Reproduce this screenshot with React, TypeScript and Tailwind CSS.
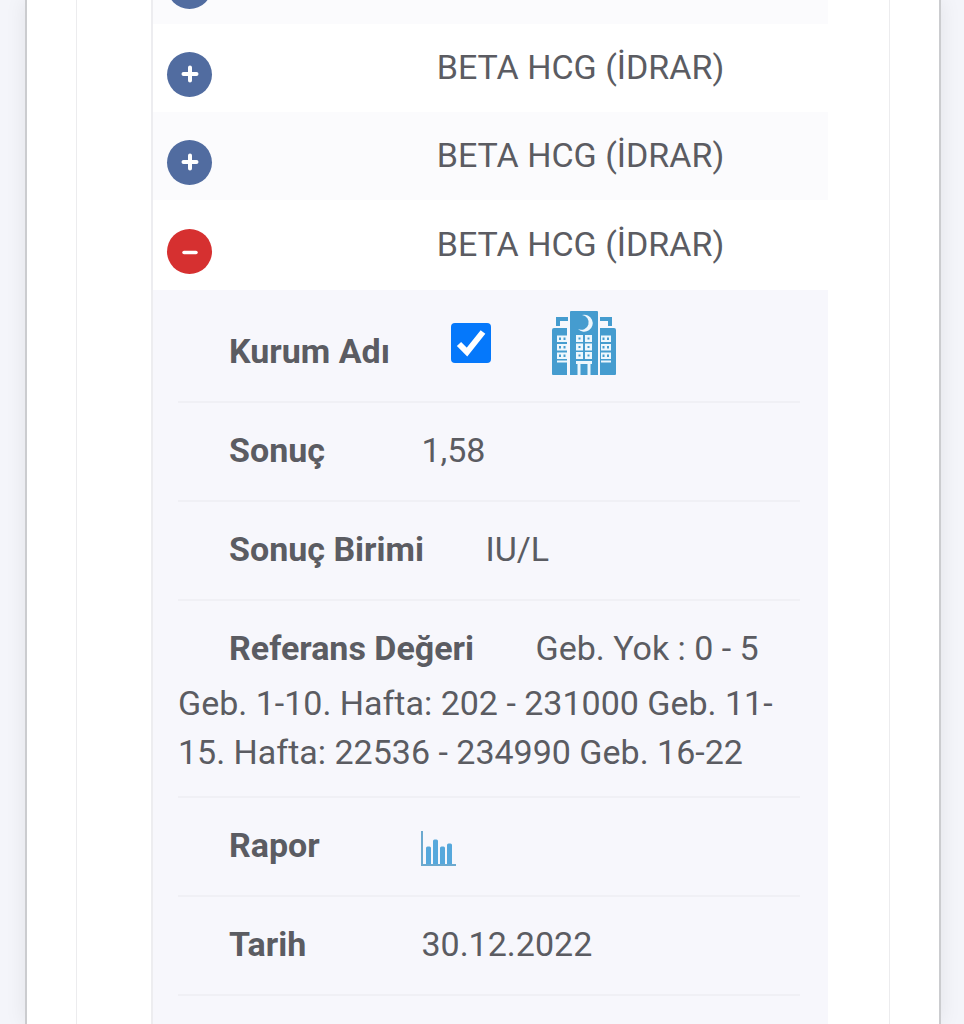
import type {ReactNode} from 'react';
import clsx from 'clsx';

type Test = {id: number; name: string; open?: boolean};

const tests: Test[] = [
  {id: 1, name: 'BETA HCG (İDRAR)'},
  {id: 2, name: 'BETA HCG (İDRAR)'},
  {id: 3, name: 'BETA HCG (İDRAR)'},
  {id: 4, name: 'BETA HCG (İDRAR)', open: true},
];

function HospitalIcon() {
  return (
    <svg viewBox="0 0 66 66" className="h-[66px] w-[66px]" aria-hidden="true">
      <g fill="#459ccf">
        <path d="M5 16V7h12v4H9v5zM61 16V7H49v4h8v5z" />
        <path d="M1 20a2 2 0 0 1 2-2h13v47H2a1 1 0 0 1-1-1zM65 20a2 2 0 0 0-2-2H49v47h15a1 1 0 0 0 1-1z" />
        <path d="M19 2a1 1 0 0 1 1-1h26a1 1 0 0 1 1 1v63H19z" />
      </g>
      <g fill="#eef7fd">
        <path d="M31 5A8.500 8.500 0 1 1 27 19A7.400 7.400 0 1 0 31 5z" />
        <path d="M25 51h16v3h-1.500V65h-3V54h-7v11h-3V54H25z" />
        <path d="M6 50.500h10v2H6zM50 50.500h10v2H50z" />
        {[25, 33.5, 42].map((y) => (
          <g key={y}>
            <path fillRule="evenodd" d={`M6 ${y + 0.5}h10v6.500h-10zM8 ${y + 2.5}v2.500h2v-2.500zM12.500 ${y + 2.5}v2.500h2v-2.500z`} />
            <path fillRule="evenodd" d={`M50 ${y + 0.5}h10v6.500h-10zM51.500 ${y + 2.5}v2.500h2v-2.500zM56 ${y + 2.5}v2.500h2v-2.500z`} />
            <path fillRule="evenodd" d={`M25 ${y}h7v7h-7zM27.500 ${y + 2.5}v2h2v-2z`} />
            <path fillRule="evenodd" d={`M34 ${y}h7v7h-7zM36.500 ${y + 2.5}v2h2v-2z`} />
          </g>
        ))}
      </g>
    </svg>
  );
}

function ChartIcon() {
  return (
    <svg viewBox="0 0 35 35" className="h-[35px] w-[35px]" aria-hidden="true">
      <path d="M0 0h2v33h33v2H0z" fill="#6ba9cf" />
      <path
        d="M5 33V17a1.500 1.500 0 0 1 1.500-1.500h2A1.500 1.500 0 0 1 10 17v16zM12 33V10a1.500 1.500 0 0 1 1.500-1.500h2A1.500 1.500 0 0 1 17 10v23zM19 33V17a1.500 1.500 0 0 1 1.500-1.500h2A1.500 1.500 0 0 1 24 17v16zM26 33V14a1.500 1.500 0 0 1 1.500-1.500h2A1.500 1.500 0 0 1 31 14v19z"
        fill="#56a8dc"
      />
    </svg>
  );
}

function ToggleButton({open}: {open?: boolean}) {
  return (
    <button
      type="button"
      aria-label={open ? 'Kapat' : 'Aç'}
      aria-expanded={!!open}
      className={clsx(
        'mt-3 flex h-[45px] w-[45px] items-center justify-center rounded-full',
        open ? 'bg-[#d63030]' : 'bg-[#516ca0]',
      )}
    >
      <svg viewBox="0 0 18 18" className="h-[18px] w-[18px]" stroke="#fff" strokeLinecap="round">
        {open ? <path d="M3 10.500h12" strokeWidth="3.500" /> : <path d="M2.500 9h13M9 2.500v13" strokeWidth="4" />}
      </svg>
    </button>
  );
}

function Detail({label, children}: {label: ReactNode; children: ReactNode}) {
  return (
    <li className="border-b-2 border-[#f0f0f5] pt-4 pb-[19px]">
      <span className="inline-block min-w-[235px] pr-[53px] pl-[51px] leading-[62px] font-bold">{label}</span>{' '}
      {children}
    </li>
  );
}

function Details() {
  return (
    <ul className="pt-1 pr-[28px] pb-16 pl-[25px] leading-[49px]">
      <Detail label={<label htmlFor="kurum">Kurum Adı</label>}>
        <span className="inline-flex items-center gap-[60px]">
          <span className="grid">
            <input
              id="kurum"
              type="checkbox"
              defaultChecked
              className="peer col-start-1 row-start-1 h-10 w-10 appearance-none rounded-[4px] bg-[#0578fb]"
            />
            <svg
              viewBox="0 0 40 40"
              className="pointer-events-none invisible col-start-1 row-start-1 h-10 w-10 peer-checked:visible"
              fill="none"
              stroke="#fff"
              strokeWidth="6"
            >
              <path d="M8 21l8 8L32 9" />
            </svg>
          </span>
          <HospitalIcon />
        </span>
      </Detail>
      <Detail label="Sonuç">1,58</Detail>
      <Detail label="Sonuç Birimi">IU/L</Detail>
      <Detail label="Referans Değeri">
        Geb. Yok : 0 - 5 Geb. 1-10. Hafta: 202 - 231000 Geb. 11-15. Hafta: 22536 - 234990 Geb. 16-22
      </Detail>
      <Detail label="Rapor">
        <a href="#rapor" aria-label="Rapor" className="inline-block align-middle">
          <ChartIcon />
        </a>
      </Detail>
      <Detail label="Tarih">30.12.2022</Detail>
    </ul>
  );
}

export default function App() {
  return (
    <div className="h-screen overflow-hidden bg-[#f4f5fa] pr-[23px] pl-[25px] font-['Roboto',sans-serif] text-[34px] text-[#5b5c62]">
      <main className="h-full border-x-2 border-[#cbcccf] bg-white px-[49px] shadow-[0_0_20px_rgba(0,0,0,0.08)]">
        <section className="h-full border-x border-[#ececee] pr-[61px] pl-[74px]">
          <div className="h-full overflow-hidden border-l-2 border-[#ededf0]">
            <table className="-mt-16 w-full border-collapse">
              <tbody>
                {tests.map((test, i) => (
                  <tr
                    key={test.id}
                    className={clsx(test.open ? 'h-[90px]' : 'h-[88px]', i % 2 === 0 ? 'bg-[#fbfbfd]' : 'bg-white')}
                  >
                    <td className="w-[180px] pl-[14px] align-middle">
                      <ToggleButton open={test.open} />
                    </td>
                    <td className="pb-[2px] text-center align-middle leading-9">{test.name}</td>
                  </tr>
                ))}
                <tr className="bg-[#f7f7fc]">
                  <td colSpan={2} className="p-0">
                    <Details />
                  </td>
                </tr>
              </tbody>
            </table>
          </div>
        </section>
      </main>
    </div>
  );
}
